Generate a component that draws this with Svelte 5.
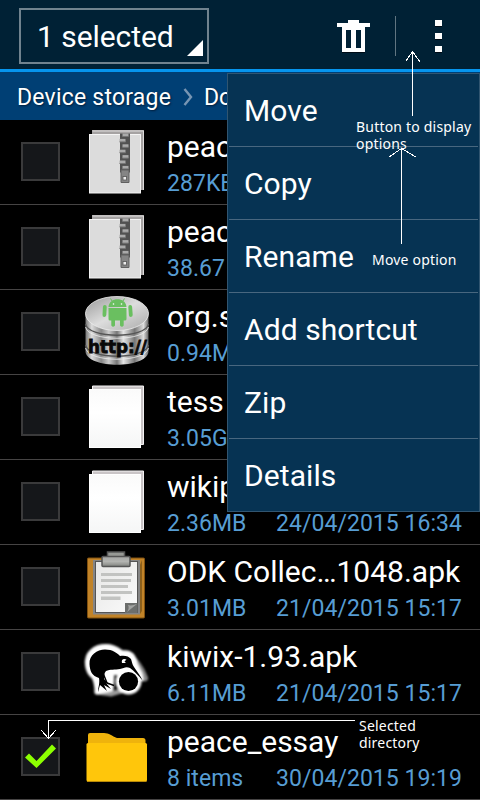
<script>
  const files = [
    { name: 'peace', size: '287KB', icon: 'zip' },
    { name: 'peace', size: '38.67', icon: 'zip' },
    { name: 'org.s', size: '0.94M', icon: 'http' },
    { name: 'tess', size: '3.05G', icon: 'file' },
    { name: 'wikip', size: '2.36MB', date: '24/04/2015 16:34', icon: 'file' },
    { name: 'ODK Collec…1048.apk', size: '3.01MB', date: '21/04/2015 15:17', icon: 'clipboard' },
    { name: 'kiwix-1.93.apk', size: '6.11MB', date: '21/04/2015 15:17', icon: 'kiwi' },
    { name: 'peace_essay', size: '8 items', date: '30/04/2015 19:19', icon: 'folder', checked: true }
  ];
  const options = ['Move', 'Copy', 'Rename', 'Add shortcut', 'Zip', 'Details'];
  const teeth = [0, 1, 2, 3, 4, 5, 6];
</script>

<main class="screen">
  <header class="bar">
    <div class="selector">
      <span>1 selected</span>
      <svg class="corner" width="16" height="16"><path d="M16 0V16H0Z" fill="#fff" /></svg>
    </div>
    <svg class="trash" width="33" height="33" viewBox="0 0 33 33">
      <path d="M5 8H28V33H5Z" fill="#000c16" />
      <path d="M8 9H25V29H8Z" fill="#002135" />
      <path fill="#fff" fill-rule="evenodd" d="M11 0H22V3H33V7H28V32H5V7H0V3H11ZM9 10V28H14V10ZM19 10V28H24V10Z" />
    </svg>
    <i class="split"></i>
    <div class="dots"><b></b><b></b><b></b></div>
  </header>

  <nav class="crumbs">
    <span class="storage">Device storage</span>
    <svg width="10" height="18" viewBox="0 0 10 18"><path d="M1.5 1L8 9L1.5 17" fill="none" stroke="#7795b3" stroke-width="2.4" /></svg>
    <span class="next">Do</span>
  </nav>

  <ul class="files">
    {#each files as file}
      <li>
        <div class="box">
          {#if file.checked}
            <svg width="35" height="35" viewBox="0 0 35 35"><path d="M2 18.500L6 14.500L13.500 22L29 5.500L33 9.500L13.500 29Z" fill="#8cff00" /></svg>
          {/if}
        </div>
        <svg class="icon" width="70" height="84" viewBox="0 0 70 84">
          {#if file.icon === 'zip'}
            <path d="M12 10H64V70H12Z" fill="#a5a2a2" />
            <path d="M12.5 11H63.500V70" fill="none" stroke="#dedcdc" />
            <rect x="9.5" y="14.500" width="51" height="58.500" fill="#dcdcdc" stroke="#f4f4f4" />
            <rect x="40" y="13.500" width="10" height="39" fill="#515151" />
            {#each teeth as n}
              <rect x={n % 2 ? 39.5 : 42.5} y={13.5 + n * 5.4} width="6" height="3" fill="#aaa" />
              <rect x={n % 2 ? 39.5 : 42.5} y={16 + n * 5.4} width="6" height="1" fill="#777" />
            {/each}
            <path d="M41 50H49V62.5H41Z" fill="#858585" stroke="#606060" />
            <rect x="43" y="56.5" width="3.5" height="3.5" fill="#eee" stroke="#555" stroke-width=".8" />
          {:else if file.icon === 'file'}
            <path d="M12.5 11H63.500V69.500H12.500Z" fill="#c9c4c6" stroke="#f5f3f4" />
            <rect x="9.5" y="14.500" width="51" height="58" fill="url(#paper)" stroke="#fff" />
          {:else if file.icon === 'http'}
            <path d="M5.500 22V62C8 79 66 79 68.500 62V22Z" fill="url(#metal)" />
            <path d="M5.500 34C8 49 66 49 68.500 34M5.500 55C8 70 66 70 68.500 55" fill="none" stroke="#555" stroke-width="1.4" />
            <path d="M5.500 37C8 52 66 52 68.500 37M5.500 58C8 73 66 73 68.500 58" fill="none" stroke="#eee" stroke-width="1" opacity=".8" />
            <ellipse cx="37" cy="23.5" rx="31.5" ry="17" fill="url(#lid)" stroke="#ececec" stroke-width=".8" />
            <g fill="#6abf60">
              <path d="M28.500 17C29 6.500 46 6.500 46.500 17ZM28.500 18H46.500V29Q46.500 30.500 45 30.500H43.700V35.500Q42 38 40 35.500V30.500H35V35.500Q33 38 31.300 35.500V30.500H30Q28.500 30.500 28.500 29Z" />
              <path d="M24.800 17L24.400 25M50.200 17L50.800 25" stroke="#6abf60" stroke-width="3.8" stroke-linecap="round" />
              <path d="M32 11L30.500 8.500M43 11L44.500 8.500" stroke="#6abf60" stroke-width="1" />
            </g>
            <circle cx="33.5" cy="14" r=".8" fill="#fff" /><circle cx="41.5" cy="14" r=".8" fill="#fff" />
            <text x="8" y="63" class="http" textLength="59" lengthAdjust="spacingAndGlyphs">http://</text>
          {:else if file.icon === 'clipboard'}
            <rect x="7.5" y="13" width="57" height="60" rx="1" fill="#c18328" stroke="#80500f" />
            <rect x="13" y="15" width="47" height="54.5" fill="#858585" />
            <path d="M60 20L62 15V66L60 69" fill="#8b601d" />
            <rect x="15.5" y="16.5" width="42" height="51" fill="url(#sheet)" stroke="#555" />
            <path d="M21 28H52V31H21ZM21 34H51V37H21ZM21 40H48V43H21ZM21 46H52V49H21ZM21 51.500H40.500V55H21Z" fill="#c2c3c1" />
            <path d="M45 58H57.500V68H45Z" fill="#6c6e6c" /><path d="M47 67C49 64 49 62 48 60C51 61 54 60 57 59Z" fill="#a2a3a1" />
            <path d="M27.500 12V7H44.500V12Z" fill="#979995" stroke="#555" stroke-width="1.5" />
            <rect x="22" y="11.5" width="28" height="10" rx="1" fill="url(#clip)" stroke="#555" stroke-width="1.5" />
          {:else if file.icon === 'kiwi'}
            <g filter="url(#glow)">
              <path d="M50 28C56 31 60 37 64.500 48" stroke="#888" stroke-width="7" fill="none" stroke-linecap="round" />
              <path d="M17 62L31 64L44 60" stroke="#999" stroke-width="5" fill="none" stroke-linecap="round" />
              <path d="M7.500 35C6 23 15 16.500 26 16.500C35 16.500 39 21 42 23C50 22 54 26 55 34L60 44L61 49L53 41L32 43L31 59L17 62C17 56 16 51 14 47C10 44 8 40 7.500 35Z" fill="#fff" stroke="#fff" stroke-width="5" stroke-linejoin="round" />
              <circle cx="48.5" cy="51.5" r="13" fill="#fff" />
            </g>
            <path d="M9.500 34C9 25 17 19.500 25 19.500C33 19.500 37 23 40 26C44 25 49 26 51 29C52 32 52 34 54 37C57 42 61 46 62.500 50.500C59 46 54 41 50 38C46 36 44 38 40 39C35 40 30 39 26 41C24 43 24 46 24 49L30 55L26 53L31 59L24 55L27 61L20 55L18 62C18 57 20 54 19 48C12 46 9.800 41 9.500 34Z" fill="#000" />
            <path d="M23 43L27 53L34 55.500" stroke="#000" stroke-width="1.5" fill="none" />
            <path d="M42 33C41 29.500 43.500 28 46.500 29.500L44.500 31.500L46 33Z" fill="#fff" />
            <circle cx="48.5" cy="51.5" r="9.6" fill="#000" />
          {:else}
            <path d="M8 33V20Q8 18 10 18H24C29 18 32 21 37 23H63Q65.500 23 65.500 25.500V34Z" fill="#efb30c" />
            <rect x="6.5" y="28" width="60.5" height="38.5" rx="1.5" fill="#ffc60b" />
            <path d="M7 66.500H66.500" stroke="#b98a08" />
          {/if}
        </svg>
        <div class="info">
          <div class="name">{file.name}</div>
          <div class="meta"><span>{file.size}</span>{#if file.date}<span>{file.date}</span>{/if}</div>
        </div>
      </li>
    {/each}
  </ul>

  <div class="menu">
    {#each options as option}
      <div class="option"><span>{option}</span></div>
    {/each}
  </div>

  <svg class="arrows" width="480" height="800" viewBox="0 0 480 800" fill="none" stroke="#fff" shape-rendering="crispEdges">
    <defs>
      <linearGradient id="paper" x2="0" y2="1"><stop stop-color="#fafafa" /><stop offset=".4" stop-color="#fff" /><stop offset="1" stop-color="#f5f6f6" /></linearGradient>
      <linearGradient id="sheet" x2="1" y2="1"><stop stop-color="#e7e7e6" /><stop offset="1" stop-color="#fafafa" /></linearGradient>
      <linearGradient id="clip" x2="0" y2="1"><stop stop-color="#a5a6a4" /><stop offset=".5" stop-color="#b3b4b1" /><stop offset="1" stop-color="#80827e" /></linearGradient>
      <linearGradient id="lid" x2="1" y2="1"><stop stop-color="#999" /><stop offset=".5" stop-color="#ddd" /><stop offset="1" stop-color="#aaa" /></linearGradient>
      <linearGradient id="metal"><stop stop-color="#777" /><stop offset=".1" stop-color="#ddd" /><stop offset=".25" stop-color="#888" /><stop offset=".37" stop-color="#ccc" /><stop offset=".5" stop-color="#777" /><stop offset=".6" stop-color="#e5e5e5" /><stop offset=".78" stop-color="#777" /><stop offset=".92" stop-color="#ddd" /><stop offset="1" stop-color="#666" /></linearGradient>
      <filter id="glow"><feGaussianBlur stdDeviation="1.3" /></filter>
    </defs>
    <path d="M412.500 116V51.500M406 61L412.500 51.500L420 62" />
    <path d="M401.500 244V148.500M389 157L401.500 148.500L416 157" />
    <path d="M355 720.500H48.500V738M41 730L48.500 738.500L56 730" />
  </svg>
  <p class="note n1">Button to display<br />options</p>
  <p class="note n2">Move option</p>
  <p class="note n3">Selected<br />directory</p>
</main>

<style>
  :global(body) { margin: 0; background: #000; }
  .screen { position: relative; width: 480px; height: 800px; overflow: hidden; background: #000; color: #fff; font-family: Roboto, sans-serif; white-space: nowrap; }
  .bar { box-sizing: border-box; height: 72px; display: flex; align-items: flex-start; background: #002135; border-bottom: 3px solid #0695ee; padding: 8px 0 0 19px; }
  .selector { box-sizing: border-box; width: 190px; height: 56px; border: 2px solid #70838f; display: flex; align-items: flex-end; justify-content: space-between; padding: 0 4px 6px 16px; }
  .selector span { font-size: 30px; line-height: 38px; letter-spacing: -.05px; }
  .corner { display: block; }
  .trash { margin: 12px 0 0 128px; }
  .split { width: 1px; height: 40px; margin: 8px 0 0 25px; background: #607581; }
  .dots { display: flex; flex-direction: column; gap: 7px; margin: 12px 0 0 39px; }
  .dots b { width: 7px; height: 6px; background: #fff; box-shadow: 0 1px #000c16; }
  .crumbs { box-sizing: border-box; height: 48px; display: flex; align-items: center; padding: 2px 0 0 17px; background: #003f74; font-size: 23px; text-shadow: 1px 1px 2px #001e3c; }
  .storage { width: 166px; letter-spacing: .22px; }
  .next { margin-left: 11px; }
  .files { list-style: none; margin: 0; padding: 0; }
  .files li { height: 84px; border-bottom: 1px solid #464444; display: flex; }
  .box { box-sizing: border-box; width: 39px; height: 39px; margin: 22px 20px 0 21px; border: 2px solid #3a3a3b; background: #15171a; }
  .box svg, .icon { display: block; }
  .icon { flex: none; }
  .http { font: bold 17px "DejaVu Sans", sans-serif; fill: #080808; stroke: #080808; stroke-width: .8px; }
  .info { padding: 7px 0 0 17px; width: 295px; }
  .name { font-size: 30px; line-height: 40px; }
  .meta { display: flex; justify-content: space-between; margin-top: 2px; font-size: 23px; line-height: 30px; letter-spacing: .04px; color: #579dd3; }
  .menu { position: absolute; left: 227px; top: 73px; box-sizing: border-box; width: 253px; height: 439px; border: 1px solid #315570; background: #063353; padding: 0 1px; }
  .option { box-sizing: border-box; height: 73px; border-bottom: 1px solid #48677f; padding-left: 15px; font-size: 30px; line-height: 73px; letter-spacing: .08px; }
  .option:last-child { border-bottom: 0; }
  .arrows { position: absolute; left: 0; top: 0; }
  .note { position: absolute; margin: 0; font: 14px/17px "Noto Sans", sans-serif; letter-spacing: .2px; }
  .n1 { left: 356px; top: 118px; }
  .n2 { left: 372px; top: 251px; }
  .n3 { left: 359px; top: 717px; }
</style>
